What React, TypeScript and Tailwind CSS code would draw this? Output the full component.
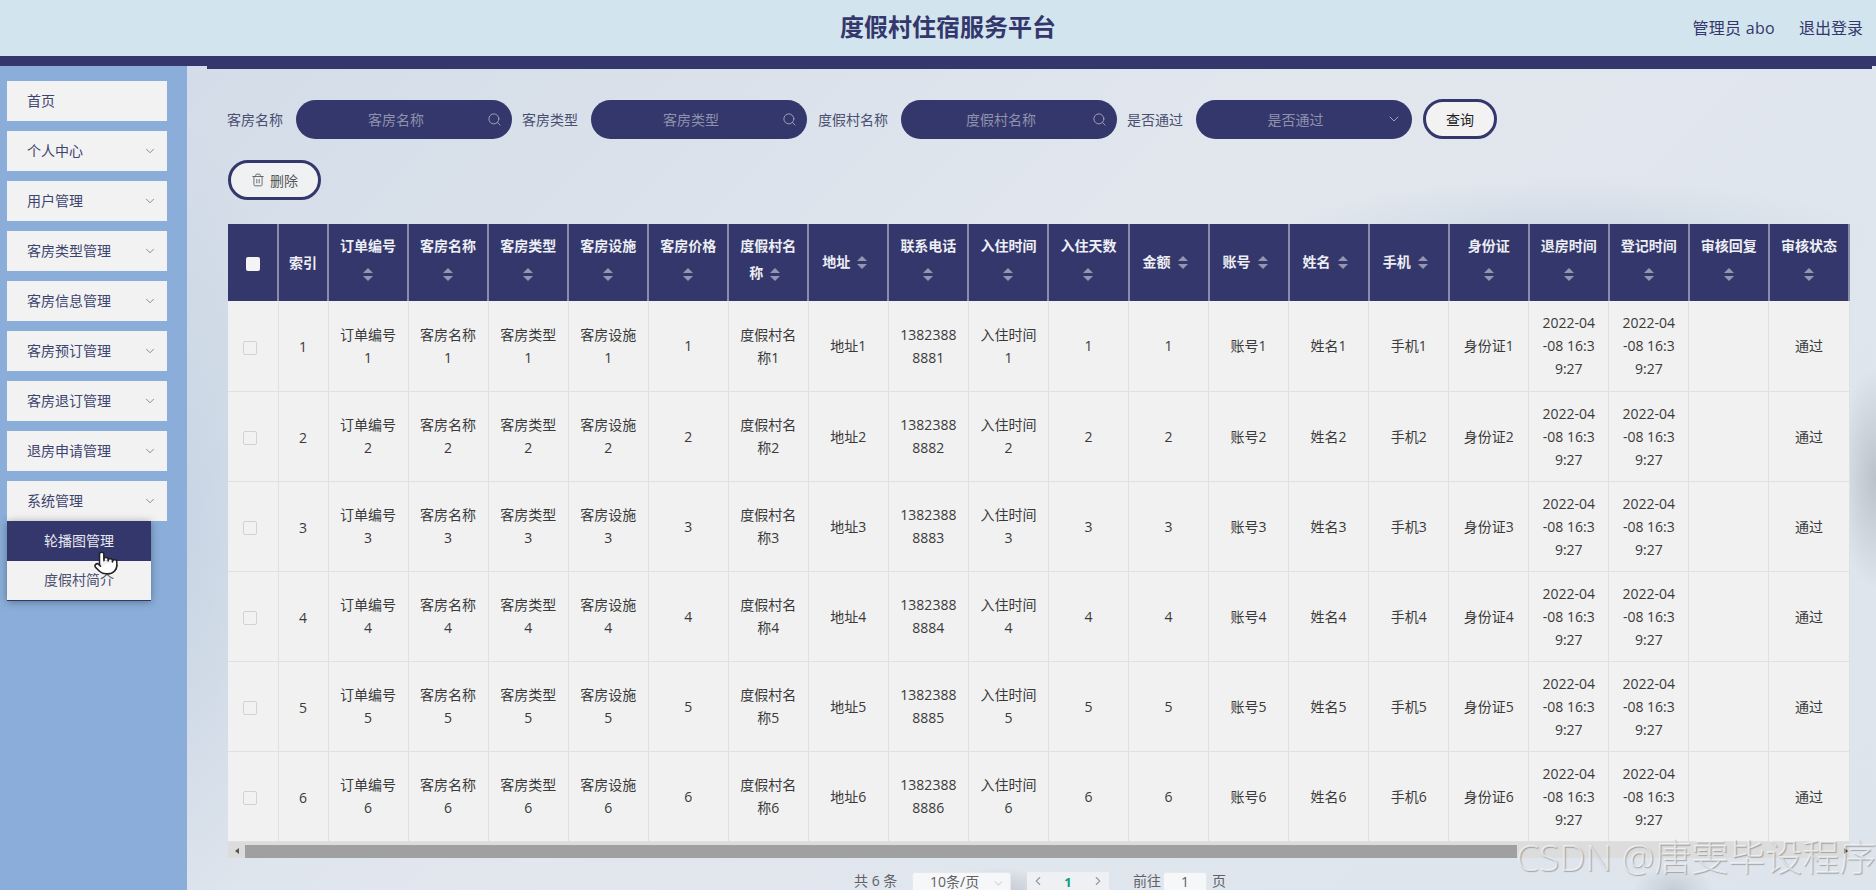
import { ChevronDown, ChevronLeft, ChevronRight, Pointer, Search, Trash2 } from "lucide-react";

const menu = ["个人中心", "用户管理", "客房类型管理", "客房信息管理", "客房预订管理", "客房退订管理", "退房申请管理", "系统管理"];

const heads = ["订单编号", "客房名称", "客房类型", "客房设施", "客房价格", "度假村名称", "地址", "联系电话", "入住时间", "入住天数", "金额", "账号", "姓名", "手机", "身份证", "退房时间", "登记时间", "审核回复", "审核状态"];

const date = "2022-04\n-08 16:3\n9:27";

const cells = (n: number) => [
  `订单编号 ${n}`, `客房名称 ${n}`, `客房类型 ${n}`, `客房设施 ${n}`, `${n}`, `度假村名称${n}`, `地址${n}`, `1382388888${n}`,
  `入住时间 ${n}`, `${n}`, `${n}`, `账号${n}`, `姓名${n}`, `手机${n}`, `身份证${n}`, date, date, "", "通过",
];

function Caret() {
  return (
    <span className="inline-flex h-[34px] w-[24px] flex-col items-center justify-center gap-[3px] align-middle">
      <span className="h-0 w-0 border-x-[5px] border-b-[5px] border-x-transparent border-b-[#9496b0]" />
      <span className="h-0 w-0 border-x-[5px] border-t-[5px] border-x-transparent border-t-[#9496b0]" />
    </span>
  );
}

function Field({ label, text, select }: { label: string; text: string; select?: boolean }) {
  return (
    <div className="flex items-center gap-[13px]">
      <span className="text-[14px] text-[#4a4f70]">{label}</span>
      <div className="flex h-[39px] w-[216px] items-center rounded-[20px] bg-[#34376b] pl-[15px] pr-[10px]">
        <span className="flex-1 pr-[6px] text-center text-[14px] text-[#8f92ad]">{text}</span>
        {select ? (
          <ChevronDown className="h-[16px] w-[16px] text-[#a3a5bd]" strokeWidth={1.5} />
        ) : (
          <Search className="h-[15px] w-[15px] text-[#a3a5bd]" strokeWidth={1.5} />
        )}
      </div>
    </div>
  );
}

export default function App() {
  return (
    <div className="relative flex h-[890px] w-[1876px] flex-col overflow-hidden font-['Open_Sans','Noto_Sans_CJK_SC',sans-serif] text-[#3a3a3a]">
      <header className="relative flex h-[66px] shrink-0 items-center justify-end gap-[24px] border-b-[10px] border-[#34376b] bg-[#d2e4ee] pr-[13px] text-[16px] text-[#34376b]">
        <h1 className="absolute left-[840px] top-[10px] text-[24px] font-bold leading-[34px]">度假村住宿服务平台</h1>
        <span className="tracking-[0.3px]">管理员 abo</span>
        <span>退出登录</span>
      </header>

      <div className="flex min-h-0 flex-1">
        <aside className="relative w-[187px] shrink-0 bg-[#8aaed9] px-[7px] pt-[15px]">
          <div className="flex w-[160px] flex-col gap-[10px] text-[14px] leading-[18px] text-[#3d4470]">
            <div className="flex h-[40px] items-center bg-[#f2f2f2] pb-[1px] pl-[20px]">首页</div>
            {menu.map((m) => (
              <div key={m} className="flex h-[40px] items-center justify-between bg-[#f2f2f2] pb-[1px] pl-[20px] pr-[10px]">
                <span>{m}</span>
                <ChevronDown className="h-[14px] w-[14px] text-[#5f6478]" strokeWidth={1.25} />
              </div>
            ))}
          </div>
          <div className="absolute left-[7px] top-[455px] z-10 w-[144px] border-b border-[#34376b] text-center text-[14px] shadow-[0_1px_8px_rgba(0,0,0,0.35)]">
            <div className="h-[40px] bg-[#34376b] leading-[40px] text-[#e8e8f0]">轮播图管理</div>
            <div className="h-[39px] bg-[#f2f2f2] leading-[38px] text-[#4a4f70]">度假村简介</div>
          </div>
          <Pointer className="absolute left-[93px] top-[483px] z-20 h-[28px] w-[26px] fill-white text-[#222]" strokeWidth={1.4} />
        </aside>

        <main className="min-w-0 flex-1 bg-[radial-gradient(ellipse_60px_22px_at_48%_100%,#c3c9d0,transparent),radial-gradient(ellipse_40px_24px_at_88%_100%,#c6ccd3,transparent),radial-gradient(ellipse_40px_110px_at_100%_50%,#bcc2ca,transparent),radial-gradient(ellipse_300px_60px_at_82%_21%,#ccd8e4,transparent),radial-gradient(ellipse_110px_400px_at_0%_55%,#c8d5e4,transparent),linear-gradient(135deg,#d3dce8,#e2e7ee_45%,#dde4ec)]">
          <div className="ml-[20px] mr-[4px] h-[3px] bg-[#34376b]" />
          <div className="pl-[40px] pt-[30px]">
            <div className="flex h-[40px] items-center gap-[10px]">
              <Field label="客房名称" text="客房名称" />
              <Field label="客房类型" text="客房类型" />
              <div className="ml-[1px]">
                <Field label="度假村名称" text="度假村名称" />
              </div>
              <Field label="是否通过" text="是否通过" select />
              <button className="ml-[1px] h-[40px] w-[74px] rounded-[20px] border-[3px] border-[#34376b] bg-[#f2f2f2] text-[14px] text-[#222]">查询</button>
            </div>
            <button className="ml-[1px] mt-[21px] flex h-[40px] w-[93px] items-center justify-center gap-[5px] rounded-[20px] border-[3px] border-[#34376b] bg-[#f0f1f3] text-[14px] text-[#555]">
              <Trash2 className="h-[14px] w-[14px]" strokeWidth={1.4} />
              删除
            </button>

            <div className="ml-[1px] mt-[24px] w-[1623px]">
              <table className="w-[1622px] table-fixed border-collapse text-center text-[14px] leading-[23px]">
                <colgroup>
                  <col className="w-[50px]" />
                  <col className="w-[50px]" />
                  {heads.map((h) => (
                    <col key={h} className="w-[80px]" />
                  ))}
                </colgroup>
                <thead>
                  <tr className="h-[77px] bg-[#34376b] font-bold text-[#eceef4]">
                    <th className="border-r-2 border-[#8a8ca9]">
                      <span className="inline-block h-[14px] w-[14px] rounded-[2px] bg-[#f4f4f4] align-middle" />
                    </th>
                    <th className="border-r-2 border-[#8a8ca9]">索引</th>
                    {heads.map((h) => (
                      <th key={h} className="break-all border-r-2 border-[#8a8ca9] px-[10px] py-[10px] font-bold">
                        {h}
                        <Caret />
                      </th>
                    ))}
                  </tr>
                </thead>
                <tbody>
                  {[1, 2, 3, 4, 5, 6].map((n) => (
                    <tr key={n} className="h-[90px] bg-[#f1f1f1]">
                      <td className="border-b border-r border-[#dfe0e6]">
                        <span className="ml-[-5px] inline-block h-[14px] w-[14px] rounded-[2px] border border-[#d2d2d6] bg-[#f2f2f2] align-middle" />
                      </td>
                      <td className="border-b border-r border-[#dfe0e6] pt-[2px]">{n}</td>
                      {cells(n).map((c, i) => (
                        <td key={i} className="whitespace-pre-line break-all border-b border-r border-[#dfe0e6] px-[10px] pb-[10px] pt-[10px]">
                          {c}
                        </td>
                      ))}
                    </tr>
                  ))}
                </tbody>
              </table>
              <div className="flex h-[16px] w-[1622px] items-end bg-[#dcdcdc]">
                <div className="flex h-[13px] w-[17px] items-center justify-center">
                  <span className="h-0 w-0 border-y-[3px] border-r-[4px] border-y-transparent border-r-[#555]" />
                </div>
                <div className="h-[13px] w-[1272px] bg-[#a0a0a0]" />
                <div className="flex h-[13px] flex-1 items-center justify-end pr-[2px]">
                  <span className="h-0 w-0 border-y-[3px] border-l-[4px] border-y-transparent border-l-[#222]" />
                </div>
              </div>
            </div>

            <div className="ml-[627px] mt-[14px] flex h-[28px] items-start text-[13px] leading-[18px] text-[#606266]">
              <span className="w-[58px] text-[14px]">共 6 条</span>
              <div className="flex h-[28px] w-[99px] items-start justify-between rounded-[3px] border border-[#e6e8ee] bg-[#f6f7f9] pl-[17px] pr-[5px]">
                <span className="text-[14px]">10条/页</span>
                <ChevronDown className="mt-[4px] h-[13px] w-[13px] text-[#b4b6bc]" strokeWidth={1.5} />
              </div>
              <div className="ml-[16px] flex h-[28px] w-[82px] items-start justify-between bg-[#eef0f3] px-[4px] pt-[2px]">
                <ChevronLeft className="h-[14px] w-[14px] text-[#9a9ca3]" />
                <span className="font-bold leading-[16px] text-[#0d9d78]">1</span>
                <ChevronRight className="h-[14px] w-[14px] text-[#9a9ca3]" />
              </div>
              <span className="ml-[24px] text-[14px]">前往</span>
              <div className="ml-[2px] h-[28px] w-[44px] rounded-[3px] border border-[#e6e8ee] bg-[#f6f7f9] text-center text-[14px]">1</div>
              <span className="ml-[5px] text-[14px]">页</span>
            </div>
          </div>
        </main>
      </div>

      <div className="absolute left-[1516px] top-[832px] z-30 whitespace-nowrap text-[37px] font-light leading-[50px] text-[#ffffff99] [text-shadow:1px_1px_1px_rgba(90,90,90,0.45)]">
        CSDN @唐雯毕设程序
      </div>
    </div>
  );
}
